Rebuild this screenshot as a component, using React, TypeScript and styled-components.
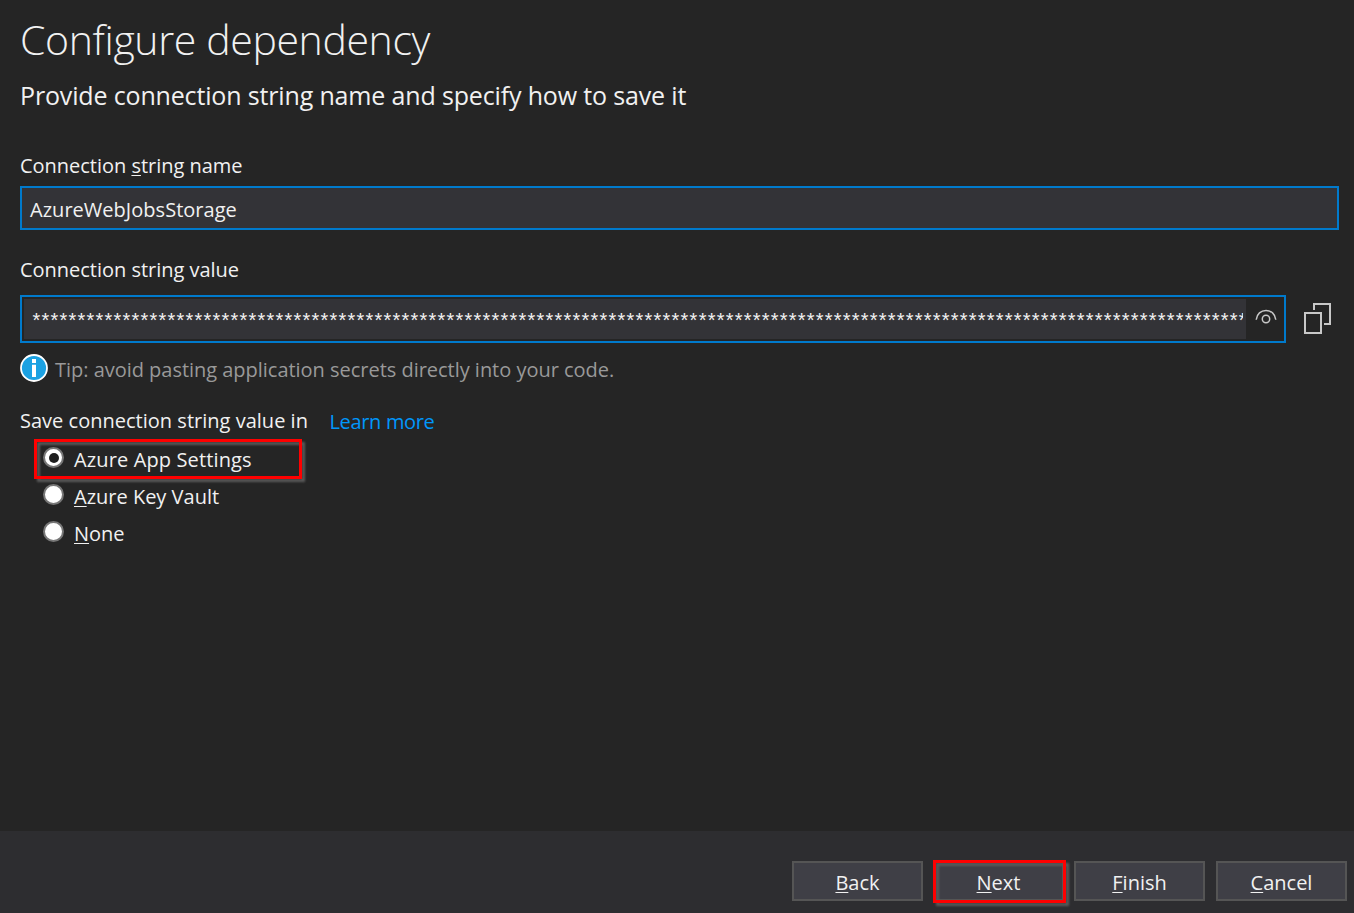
import React from 'react';
import styled, { createGlobalStyle } from 'styled-components';

const GlobalStyle = createGlobalStyle`
  * { box-sizing: border-box; }
  body {
    margin: 0;
    background: #252525;
    color: #f1f1f1;
    font: 20px/29px 'Open Sans', 'Noto Sans', sans-serif;
    overflow: hidden;
  }
  h1, h2, p { margin: 0; }
`;

const Dialog = styled.div`
  display: flex;
  flex-direction: column;
  width: 1354px;
  height: 913px;
`;

const Content = styled.main`
  flex: 1;
  display: flex;
  flex-direction: column;
  padding: 11px 15px 0 20px;
`;

const Title = styled.h1`
  font-size: 41px;
  font-weight: 300;
  line-height: 56px;
  letter-spacing: -0.37px;
`;

const Subtitle = styled.h2`
  margin-top: 11px;
  font-size: 25px;
  font-weight: 400;
  line-height: 34px;
  letter-spacing: -0.155px;
`;

const Label = styled.label<{ $top: number; $bottom: number }>`
  display: block;
  margin-top: ${(p) => p.$top}px;
  margin-bottom: ${(p) => p.$bottom}px;
  letter-spacing: -0.02px;
`;

const Mnemonic = styled.span`
  text-decoration: underline;
  text-decoration-thickness: 1px;
  text-underline-offset: 2px;
  text-decoration-skip-ink: none;
`;

const NameField = styled.div`
  height: 44px;
  padding: 7px 8px 0;
  border: 2px solid #007acc;
  background: #333337;
  letter-spacing: 0.03px;
`;

const SecretRow = styled.div`
  display: flex;
  gap: 18px;
`;

const SecretField = styled.div`
  display: flex;
  width: 1266px;
  height: 48px;
  padding: 2px;
  border: 2px solid #007acc;
`;

const SecretValue = styled.div`
  width: 1222px;
  padding: 0 3px 0 8.4px;
  background: #333337;
`;

const SecretText = styled.div`
  overflow: hidden;
  padding-top: 7px;
  font-family: 'Liberation Sans', Arial, sans-serif;
  font-size: 20px;
  line-height: 28px;
  letter-spacing: 1.22px;
  white-space: nowrap;
`;

const EyeButton = styled.div`
  padding: 9px 0 0 9px;
`;

const CopyButton = styled.div`
  padding-top: 8px;
`;

const TipRow = styled.div`
  display: flex;
  gap: 7px;
  margin-top: 11px;
  color: #999999;
  letter-spacing: -0.025px;
`;

const TipText = styled.p`
  padding-top: 1px;
`;

const SaveRow = styled.div`
  display: flex;
  gap: 21.5px;
  margin-top: 22px;
  letter-spacing: 0.015px;
`;

const Link = styled.a`
  padding-top: 1px;
  color: #0097fb;
  letter-spacing: -0.33px;
`;

const Options = styled.div`
  display: flex;
  flex-direction: column;
  align-items: flex-start;
  gap: 9px;
  padding: 9px 0 0 23px;
`;

const Option = styled.div<{ $spacing?: number }>`
  position: relative;
  display: flex;
  gap: 10px;
  height: 28px;
  letter-spacing: ${(p) => p.$spacing ?? 0}px;
`;

const Radio = styled.span<{ $checked?: boolean }>`
  display: grid;
  place-items: center;
  width: 21px;
  height: 21px;
  margin-top: 2px;
  border: 2px solid #777777;
  border-radius: 50%;
  background: #ffffff;

  &::after {
    content: '';
    width: 10px;
    height: 10px;
    border-radius: 50%;
    background: ${(p) => (p.$checked ? '#1e1e1e' : 'transparent')};
  }
`;

const Highlight = styled.span<{ $w: number; $h: number; $x: number; $y: number }>`
  position: absolute;
  left: ${(p) => p.$x}px;
  top: ${(p) => p.$y}px;
  width: ${(p) => p.$w}px;
  height: ${(p) => p.$h}px;
  border: 3px solid #ff0000;
  filter: drop-shadow(3px 3px 1px #5a5a5a);
  pointer-events: none;
`;

const Footer = styled.footer`
  display: flex;
  justify-content: flex-end;
  gap: 10px;
  height: 82px;
  padding: 30px 7px 0 0;
  background: #2d2d30;
`;

const Button = styled.div`
  position: relative;
  width: 131px;
  height: 40px;
  padding-top: 5px;
  border: 2px solid #555555;
  background: #3f3f46;
  text-align: center;

  &:last-child {
    margin-left: 1px;
  }
`;

const InfoIcon = () => (
  <svg width="28" height="28" viewBox="0 0 28 28">
    <circle cx="14" cy="14" r="13" fill="#1ba1e2" stroke="#ffffff" strokeWidth="1.8" />
    <path d="M12 5h4v4h-4zM12 10.7h4V23h-4z" fill="#ffffff" />
  </svg>
);

const EyeIcon = () => (
  <svg width="22" height="18" viewBox="0 0 22 18" display="block" fill="none" stroke="#c8c8c8" strokeWidth="1.5">
    <path d="M1.2 11.800C1.800 5.800 6 2.500 11 2.500s9.200 3.300 9.800 9.300" />
    <circle cx="11" cy="11" r="3.700" />
  </svg>
);

const CopyIcon = () => (
  <svg width="28" height="32" viewBox="0 0 28 32" fill="none" stroke="#c8c8c8" strokeWidth="2">
    <path d="M10 7V1h16v20h-6" />
    <path d="M1 10h16v20H1z" />
  </svg>
);

export default function App() {
  return (
    <Dialog>
      <GlobalStyle />
      <Content>
        <Title>Configure dependency</Title>
        <Subtitle>Provide connection string name and specify how to save it</Subtitle>

        <Label $top={39} $bottom={6}>
          Connection <Mnemonic>s</Mnemonic>tring name
        </Label>
        <NameField>AzureWebJobsStorage</NameField>

        <Label $top={25} $bottom={11}>Connection string value</Label>
        <SecretRow>
          <SecretField>
            <SecretValue>
              <SecretText>{'*'.repeat(135)}</SecretText>
            </SecretValue>
            <EyeButton>
              <EyeIcon />
            </EyeButton>
          </SecretField>
          <CopyButton>
            <CopyIcon />
          </CopyButton>
        </SecretRow>

        <TipRow>
          <InfoIcon />
          <TipText>Tip: avoid pasting application secrets directly into your code.</TipText>
        </TipRow>

        <SaveRow>
          <span>Save connection string value in</span>
          <Link>Learn more</Link>
        </SaveRow>

        <Options>
          <Option $spacing={0.13}>
            <Radio $checked />
            <span>Azure App Settings</span>
            <Highlight $x={-9} $y={-6} $w={268} $h={40} />
          </Option>
          <Option>
            <Radio />
            <span><Mnemonic>A</Mnemonic>zure Key Vault</span>
          </Option>
          <Option>
            <Radio />
            <span><Mnemonic>N</Mnemonic>one</span>
          </Option>
        </Options>
      </Content>

      <Footer>
        <Button><Mnemonic>B</Mnemonic>ack</Button>
        <Button>
          <Mnemonic>N</Mnemonic>ext
          <Highlight $x={-2} $y={-3} $w={133} $h={43} />
        </Button>
        <Button><Mnemonic>F</Mnemonic>inish</Button>
        <Button><Mnemonic>C</Mnemonic>ancel</Button>
      </Footer>
    </Dialog>
  );
}
